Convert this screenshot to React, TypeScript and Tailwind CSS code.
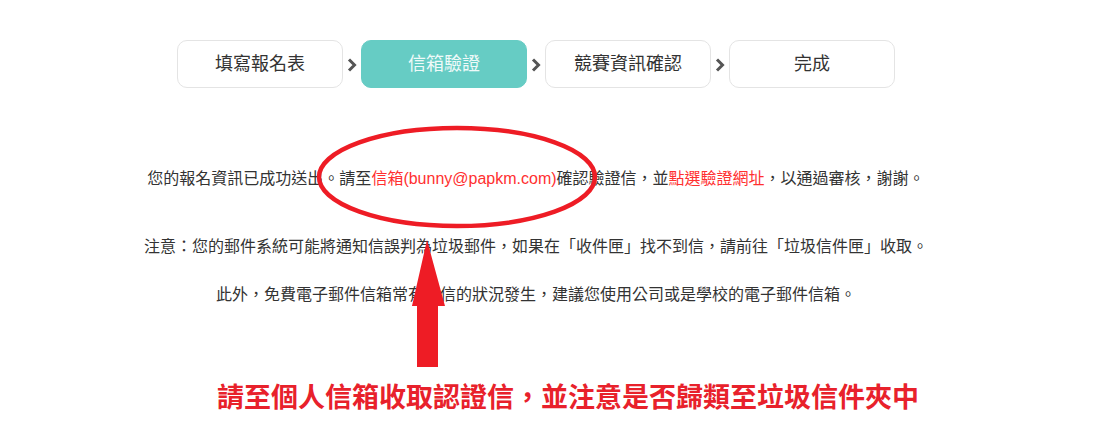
import React from 'react'

const steps = ['填寫報名表', '信箱驗證', '競賽資訊確認', '完成']
const active = 1

const Chevron = () => (
	<svg width="10" height="14" viewBox="0 0 10 14" className="block">
		<path d="M2 1.5 L7.5 7 L2 12.5" fill="none" stroke="#555555" strokeWidth="3" strokeLinejoin="miter" />
	</svg>
)

const App = () => {
	return (
		<div className="relative w-[1105px] h-[434px] bg-white overflow-hidden font-['Liberation_Sans','Noto_Sans_CJK_TC',sans-serif]">
			<div className="w-[1072px]">
				{/* steps */}
				<div className="flex justify-center items-center pt-[40px]">
					{steps.map((step, i) => (
						<React.Fragment key={step}>
							{i > 0 && (
								<div className="w-[18px] flex justify-center items-center pt-[2px]">
									<Chevron />
								</div>
							)}
							<div
								className={
									i === active
										? 'w-[166px] h-[48px] rounded-[10px] bg-[#66ccc4] border border-[#66ccc4] flex items-center justify-center text-[18px] text-[#effaf9]'
										: 'w-[166px] h-[48px] rounded-[10px] bg-white border border-[#e4e4e4] flex items-center justify-center text-[18px] text-[#333333]'
								}
							>
								{step}
							</div>
						</React.Fragment>
					))}
				</div>

				{/* message */}
				<div className="text-center text-[16px] leading-[24px] text-[#333333]">
					<p className="mt-[79px]">
						您的報名資訊已成功送出。請至<span className="text-[#ff3030]">信箱(bunny@papkm.com)</span>確認驗證信，並<span className="text-[#ff3030]">點選驗證網址</span>，以通過審核，謝謝。
					</p>
					<p className="mt-[44px]">
						注意：您的郵件系統可能將通知信誤判為垃圾郵件，如果在「收件匣」找不到信，請前往「垃圾信件匣」收取。
					</p>
					<p className="mt-[24px]">
						此外，免費電子郵件信箱常有漏信的狀況發生，建議您使用公司或是學校的電子郵件信箱。
					</p>
				</div>
			</div>

			<p className="mt-[73px] pl-[217px] text-left text-[27px] leading-[36px] font-bold text-[#e8212b]">
				請至個人信箱收取認證信，並注意是否歸類至垃圾信件夾中
			</p>

			{/* annotation overlay */}
			<svg className="absolute inset-0 pointer-events-none" width="1105" height="434" viewBox="0 0 1105 434">
				<ellipse cx="457" cy="177" rx="138" ry="49" fill="none" stroke="#ee1c25" strokeWidth="4.5" />
				<polygon points="427,240 445,306 438,306 438,367 417,367 417,306 412,306" fill="#ee1c25" />
			</svg>
		</div>
	)
}

export default App
